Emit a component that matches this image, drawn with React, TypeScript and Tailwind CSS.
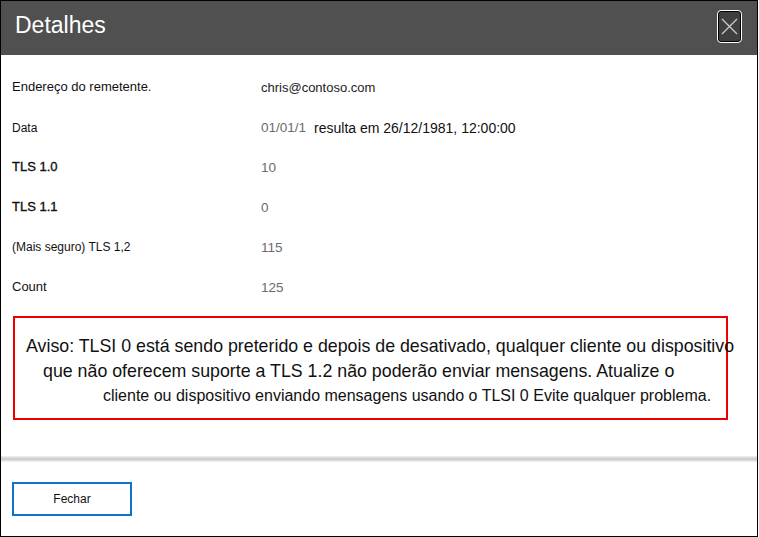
import React from 'react';

const rows: { label: string; labelClass: string; value: React.ReactNode }[] = [
  {
    label: 'Endereço do remetente.',
    labelClass: 'text-[13px]',
    value: <span className="text-[13px] text-[#222]">chris@contoso.com</span>,
  },
  {
    label: 'Data',
    labelClass: 'text-[12px] pl-[2px] pt-[2px]',
    value: (
      <span className="flex items-baseline pt-[2px]">
        <span className="text-[13.5px] text-[#6b6b6b]">01/01/1</span>
        <span className="ml-[8px] text-[14px] text-[#111] relative top-[1px]">resulta em 26/12/1981, 12:00:00</span>
      </span>
    ),
  },
  { label: 'TLS 1.0', labelClass: 'text-[13px] [-webkit-text-stroke:0.35px]', value: <span className="text-[13.5px] text-[#6b6b6b]">10</span> },
  { label: 'TLS 1.1', labelClass: 'text-[13px] [-webkit-text-stroke:0.35px]', value: <span className="text-[13.5px] text-[#6b6b6b]">0</span> },
  {
    label: '(Mais seguro) TLS 1,2',
    labelClass: 'text-[12px]',
    value: <span className="text-[13.5px] text-[#6b6b6b]">115</span>,
  },
  { label: 'Count', labelClass: 'text-[13px]', value: <span className="text-[13.5px] text-[#6b6b6b]">125</span> },
];

export default function App() {
  return (
    <div className="w-[759px] h-[537px] bg-white" style={{ fontFamily: '"Liberation Sans", Arial, sans-serif' }}>
      <div className="w-[758px] h-[537px] border border-black flex flex-col">
        <div className="h-[54px] bg-[#505050] flex items-center justify-between pl-[14px] pr-[15px]">
          <h1 className="text-white text-[23px] leading-none pb-[5px]">Detalhes</h1>
          <button className="w-[25px] h-[33px] mt-[-3px] rounded-[4px] border border-white bg-[#3f3f3f] flex items-center justify-center shadow-[inset_0_0_0_1px_#000]">
            <svg width="17" height="17" viewBox="0 0 17 17">
              <path d="M1 1 L16 16 M16 1 L1 16" stroke="#c8c8c8" strokeWidth="1.4" />
            </svg>
          </button>
        </div>

        <div className="pt-[12px]">
          {rows.map((r) => (
            <div key={r.label} className="h-10 grid grid-cols-[260px_1fr] items-center">
              <div className={`pl-[11px] text-[#111] ${r.labelClass}`}>{r.label}</div>
              <div>{r.value}</div>
            </div>
          ))}
        </div>

        <div className="ml-[12px] mt-[9px] w-[715px] h-[104px] border-2 border-[#ee0000] pt-[16px] text-[#111]">
          <div className="whitespace-nowrap text-[17.8px] leading-[25px] pl-[11px]">
            Aviso: TLSI 0 está sendo preterido e depois de desativado, qualquer cliente ou dispositivo
          </div>
          <div className="whitespace-nowrap text-[17.8px] leading-[24px] pl-[28px]">
            que não oferecem suporte a TLS 1.2 não poderão enviar mensagens. Atualize o
          </div>
          <div className="whitespace-nowrap text-[16px] leading-[26px] pl-[88px]">
            cliente ou dispositivo enviando mensagens usando o TLSI 0 Evite qualquer problema.
          </div>
        </div>

        <div className="mt-[36px] h-[6px] bg-gradient-to-b from-[#f2f2f2] via-[#c9c9c9] to-[#f4f4f4]" />

        <div className="pl-[11px] pt-[20px]">
          <button className="w-[120px] h-[34px] border-2 border-[#0a74d0] text-[12px] text-[#111] flex items-center justify-center">
            Fechar
          </button>
        </div>
      </div>
    </div>
  );
}
